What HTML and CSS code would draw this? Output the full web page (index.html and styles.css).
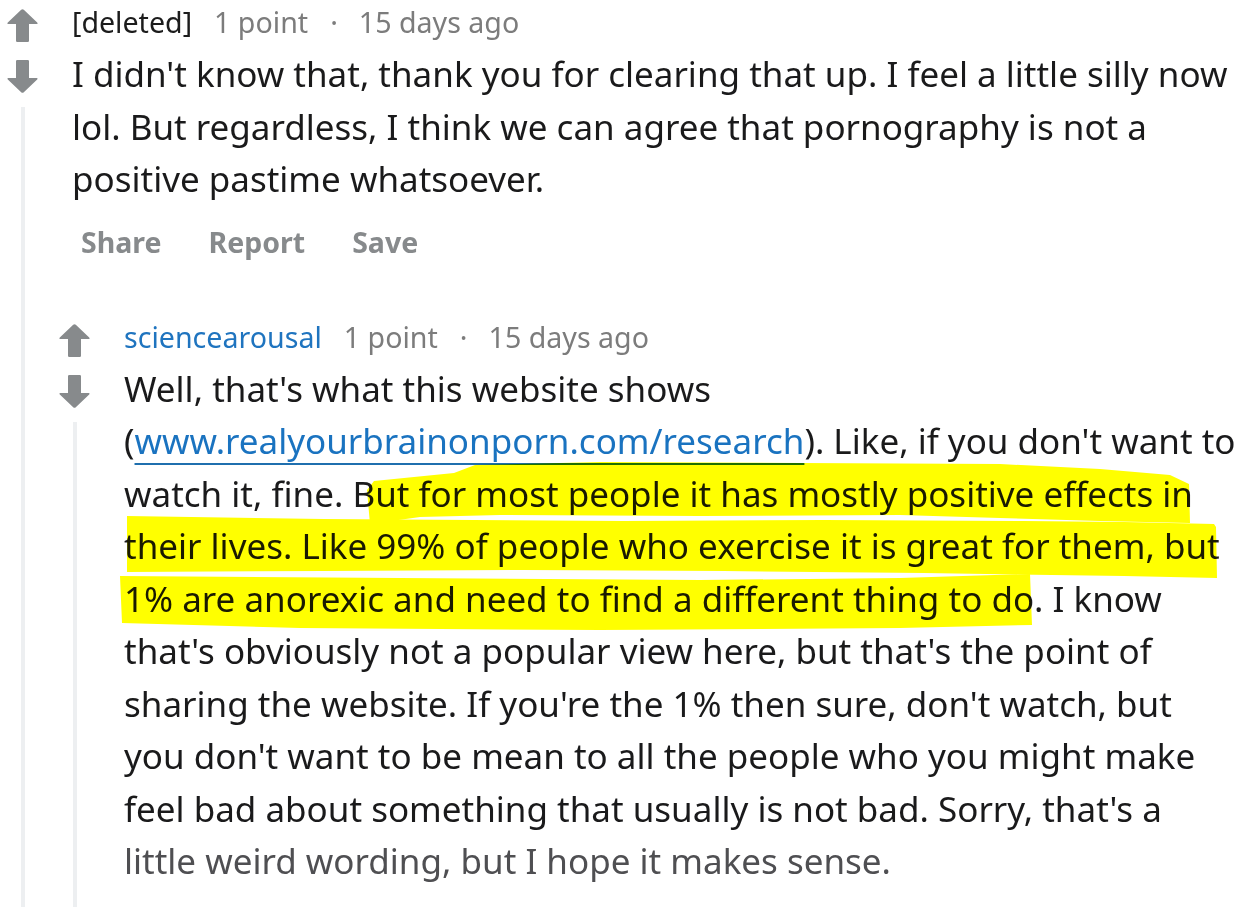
FILE: index.html
```html
<!DOCTYPE html>
<html lang="en">
<head>
<meta charset="utf-8">
<title>Comment thread</title>
<link rel="stylesheet" href="styles.css">
</head>
<body>
<div class="thread">
  <div class="comment">
    <div class="gutter">
      <svg class="vote" viewBox="0 0 31 33" aria-label="upvote"><path d="M14.2 0.8 Q15.5 -0.4 16.8 0.8 L30.2 13.6 Q31.2 15 29.6 15 L22 15 L22 31.8 Q22 33 20.8 33 L10.2 33 Q9 33 9 31.8 L9 15 L1.4 15 Q-0.2 15 0.8 13.6 Z"/></svg>
      <svg class="vote down" viewBox="0 0 31 33" aria-label="downvote"><path d="M14.2 0.8 Q15.5 -0.4 16.8 0.8 L30.2 13.6 Q31.2 15 29.6 15 L22 15 L22 31.8 Q22 33 20.8 33 L10.2 33 Q9 33 9 31.8 L9 15 L1.4 15 Q-0.2 15 0.8 13.6 Z"/></svg>
      <div class="line"></div>
    </div>
    <div class="main">
      <div class="meta"><span class="author">[deleted]</span><span class="score">1 point</span><span class="dot">·</span><span class="time">15 days ago</span></div>
      <div class="body">I didn't know that, thank you for clearing that up. I feel a little silly now<br>lol. But regardless, I think we can agree that pornography is not a<br>positive pastime whatsoever.</div>
      <div class="actions"><span>Share</span><span>Report</span><span>Save</span></div>
      <div class="children">
        <div class="comment">
          <div class="gutter">
            <svg class="vote" viewBox="0 0 31 33" aria-label="upvote"><path d="M14.2 0.8 Q15.5 -0.4 16.8 0.8 L30.2 13.6 Q31.2 15 29.6 15 L22 15 L22 31.8 Q22 33 20.8 33 L10.2 33 Q9 33 9 31.8 L9 15 L1.4 15 Q-0.2 15 0.8 13.6 Z"/></svg>
            <svg class="vote down" viewBox="0 0 31 33" aria-label="downvote"><path d="M14.2 0.8 Q15.5 -0.4 16.8 0.8 L30.2 13.6 Q31.2 15 29.6 15 L22 15 L22 31.8 Q22 33 20.8 33 L10.2 33 Q9 33 9 31.8 L9 15 L1.4 15 Q-0.2 15 0.8 13.6 Z"/></svg>
            <div class="line"></div>
          </div>
          <div class="main">
            <div class="meta"><span class="author user">sciencearousal</span><span class="score">1 point</span><span class="dot">·</span><span class="time">15 days ago</span></div>
            <div class="body">Well, that's what this website shows<br>(<a class="link" href="#">www.realyourbrainonporn.com/research</a>). Like, if you don't want to<br>watch it, fine. But for most people it has mostly positive effects in<br>their lives. Like 99% of people who exercise it is great for them, but<br>1% are anorexic and need to find a different thing to do. I know<br>that's obviously not a popular view here, but that's the point of<br>sharing the website. If you're the 1% then sure, don't watch, but<br>you don't want to be mean to all the people who you might make<br>feel bad about something that usually is not bad. Sorry, that's a<br><span class="fade">little weird wording, but I hope it makes sense.</span>
              <svg class="marker" viewBox="0 0 1120 280" aria-hidden="true">
                <path d="M243 127 L250 118 L290 114 L330 110 L351 102 L476 99 L676 100 L876 101 L976 106 L1046 112 L1065 121 L1066 160 L976 158 L876 155 L776 152 L576 153 L376 152 L296 154 L246 161 Z"/>
                <path d="M3 153 L200 156 L500 158 L700 157 L900 158 L1000 159 L1090 161 L1092 164 L1093 215 L1000 213 L800 210 L600 208 L400 207 L200 208 L3 209 Z"/>
                <path d="M-4 213 L276 215 L576 217 L776 215 L906 211 L908 262 L776 265 L476 267 L176 265 L-2 260 Z"/>
              </svg>
            </div>
          </div>
        </div>
      </div>
    </div>
  </div>
</div>
</body>
</html>
```
FILE: styles.css
```css
html, body {
  margin: 0;
  padding: 0;
  background: #ffffff;
}
body {
  overflow: hidden;
  font-family: "Noto Sans", "Open Sans", sans-serif;
  color: #1a1a1b;
}
.thread {
  height: 907px;
  overflow: hidden;
}
.comment {
  display: flex;
  align-items: stretch;
}
.gutter {
  width: 45px;
  flex: 0 0 45px;
  display: flex;
  flex-direction: column;
  align-items: center;
  padding-top: 9px;
}
.vote {
  width: 31px;
  height: 33px;
  fill: #878a8c;
  flex: 0 0 auto;
}
.vote.down {
  margin-top: 18px;
  transform: rotate(180deg);
}
.line {
  margin-top: 14px;
  width: 4px;
  flex: 1 1 auto;
  background: #edeff1;
}
.main {
  flex: 1 1 auto;
  min-width: 0;
  padding-bottom: 40px;
}
.meta {
  padding-top: 2px;
  padding-left: 27px;
  font-size: 28.6px;
  line-height: 40px;
  white-space: nowrap;
  color: #7c7c7c;
}
.author {
  color: #1c1c1c;
}
.author.user {
  color: #1f74bf;
}
.score {
  margin-left: 22px;
}
.dot {
  display: inline-block;
  margin: 0 21px 0 22px;
}
.body {
  position: relative;
  margin-top: 6px;
  padding-left: 27px;
  font-size: 35px;
  line-height: 52.5px;
  white-space: nowrap;
  color: #1a1a1b;
}
.link {
  color: #1a73c0;
  text-decoration: underline;
  text-decoration-color: #1f6fae;
  text-decoration-thickness: 2px;
  text-underline-offset: 9px;
}
.fade {
  color: #4f4f52;
}
.marker {
  position: absolute;
  left: 27px;
  top: 0;
  width: 1120px;
  height: 280px;
  overflow: visible;
  fill: #ffff00;
  mix-blend-mode: multiply;
  pointer-events: none;
}
.actions {
  margin-top: 16px;
  padding-left: 36px;
  display: flex;
  gap: 47px;
  font-size: 28.5px;
  font-weight: 700;
  line-height: 40px;
  color: #878a8c;
}
.children {
  padding-top: 53px;
  margin-left: 7px;
}
```
